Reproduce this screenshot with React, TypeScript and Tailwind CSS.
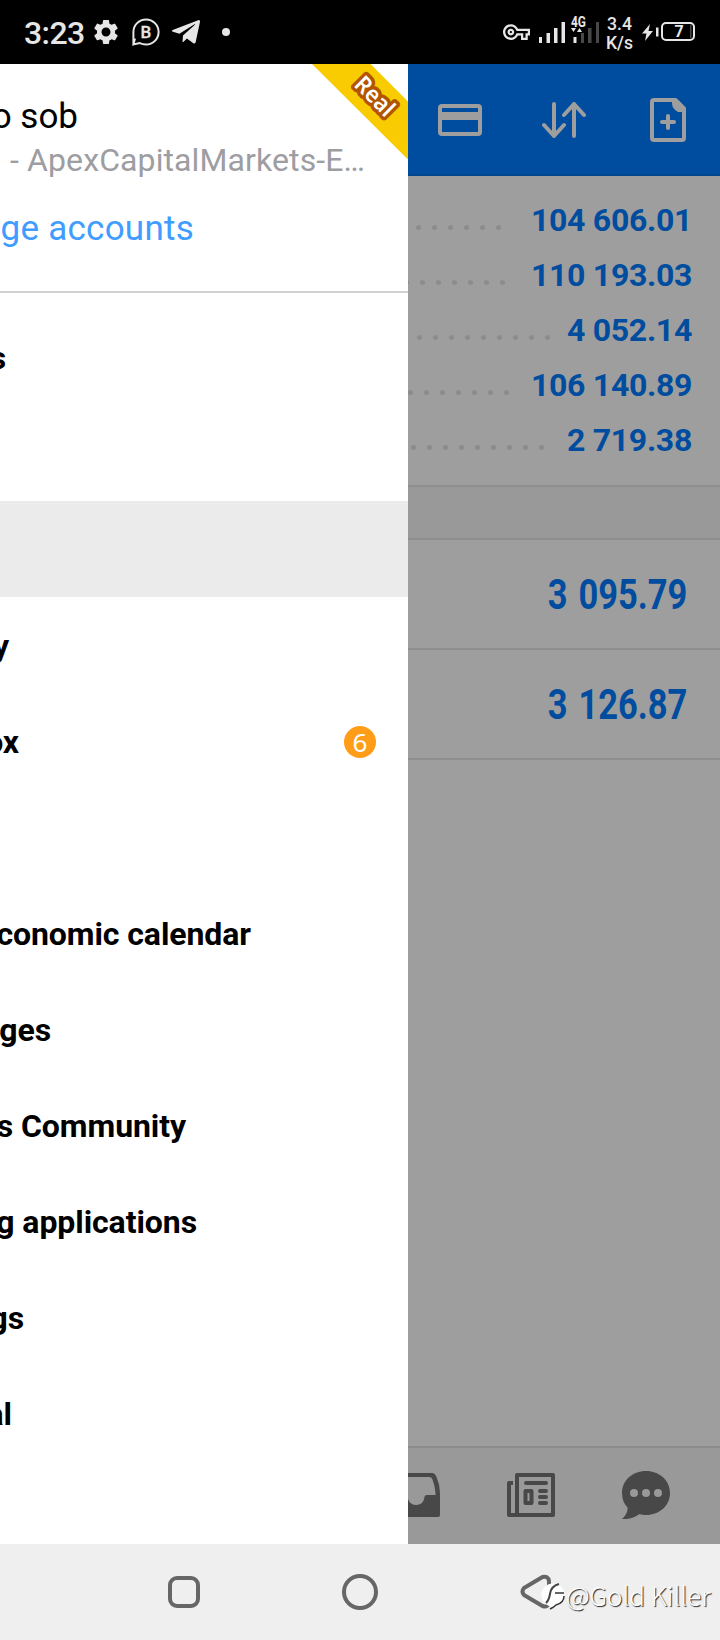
import { MdOutlineVpnKey, MdSettings } from "react-icons/md";
import { FaTelegramPlane } from "react-icons/fa";

type Summary = { value: string; dots: number; end: string; number: string };

const SUMMARY: Summary[] = [
  { value: "104 606.01", dots: 6, end: "w-[93px]", number: "w-[157px]" },
  { value: "110 193.03", dots: 7, end: "w-[97px]", number: "w-[161px]" },
  { value: "4 052.14", dots: 9, end: "w-[142px]", number: "w-[125px]" },
  { value: "106 140.89", dots: 7, end: "w-[101px]", number: "w-[161px]" },
  { value: "2 719.38", dots: 9, end: "w-[136px]", number: "w-[125px]" },
];

const POSITIONS = ["3 095.79", "3 126.87"];

type MenuItem = { label: string; width: string; active?: boolean; badge?: number };

const MENU: MenuItem[] = [
  { label: "s", width: "w-[6px]" },
  { label: "", width: "w-0" },
  { label: "", width: "w-0", active: true },
  { label: "y", width: "w-[9px]" },
  { label: "ox", width: "w-[19px]", badge: 6 },
  { label: "", width: "w-0" },
  { label: "conomic calendar", width: "w-[251px]" },
  { label: "ges", width: "w-[51px]" },
  { label: "s Community", width: "w-[186px]" },
  { label: "g applications", width: "w-[197px]" },
  { label: "gs", width: "w-[24px]" },
  { label: "al", width: "w-[12px]" },
];

function StatusBar() {
  return (
    <header className="flex h-16 shrink-0 items-center bg-black text-[#e6e6e6]">
      <span className="ml-6 w-[69px] pt-0.5 text-[32px] font-medium tracking-[-0.6px]">3:23</span>
      <MdSettings className="-ml-0.5 size-[30px] shrink-0" />
      <svg className="ml-[11px] size-7 shrink-0" viewBox="0 0 28 28" fill="none">
        <path d="M1.4 26.5V14A12.6 12.6 0 1 1 14 26.6C11.7 26.6 9.5 26 7.7 25L1.4 26.5L3 20.6" stroke="currentColor" strokeWidth="2" />
        <text x="13.8" y="20" textAnchor="middle" fill="currentColor" stroke="currentColor" strokeWidth=".3" className="text-[17px] font-medium">B</text>
      </svg>
      <FaTelegramPlane className="ml-2.5 size-8 shrink-0" />
      <span className="ml-5 size-2 rounded-full bg-current" />
      <svg className="ml-auto h-16 w-[220px] shrink-0" viewBox="500 0 220 64" fill="currentColor">
        <MdOutlineVpnKey x="503" y="18.500" size={27} />
        <path d="M539 37h3v6h-3zM546.5 33h3.5v10h-3.5zM554 28h3.5v15h-3.5zM561.5 22h3.5v21h-3.5zM573.5 37h3v6h-3z" />
        <path d="M581 33h3v10h-3zM588 28h3.5v15h-3.5zM596 22h3v21h-3z" fill="#484848" />
        <text x="571" y="27" textLength="15" lengthAdjust="spacingAndGlyphs" className="text-[14px] font-bold">4G</text>
        <path d="M571 28h5l-2.5 4zM577 32h5l-2.5-4z" />
        <text x="607" y="30" textLength="25" lengthAdjust="spacingAndGlyphs" className="text-[18px] font-medium">3.4</text>
        <text x="606" y="49" textLength="27" lengthAdjust="spacingAndGlyphs" className="text-[18px] font-medium">K/s</text>
        <path d="M650 24l-8 9.500h4.500l-1.500 7.500 8-10h-4.500z" />
        <rect x="656" y="27.500" width="2.500" height="9" />
        <rect x="662" y="23" width="32" height="17" rx="4" fill="none" stroke="currentColor" strokeWidth="2" />
        <path d="M690 25h1.500v13h-1.500z" fill="#484848" />
        <text x="679" y="37" textAnchor="middle" className="text-[16px] font-bold">7</text>
      </svg>
    </header>
  );
}

function Ribbon() {
  return (
    <svg className="absolute top-0 right-0 h-[96px] w-[97px]" viewBox="0 0 97 96">
      <path d="M1 0H59.500L97 37.500V95.500Z" fill="#f8cc00" />
      <text
        transform="translate(63.500 32.500) rotate(45)"
        y="7.500"
        textAnchor="middle"
        textLength="46"
        lengthAdjust="spacingAndGlyphs"
        fill="#fff"
        stroke="#b35400"
        strokeWidth="7"
        strokeLinejoin="round"
        paintOrder="stroke"
        className="font-['Noto_Sans',sans-serif] text-[23px] font-semibold"
      >
        Real
      </text>
    </svg>
  );
}

function Drawer() {
  return (
    <aside className="relative flex w-[408px] shrink-0 flex-col overflow-hidden bg-white text-black">
      <Ribbon />
      <div className="flex h-[229px] shrink-0 flex-col items-start border-b-2 border-[#d0d0d0]">
        <div className="mt-8 flex h-[42px] w-[78px] items-center justify-end whitespace-nowrap text-[35px]">o sob</div>
        <div className="mt-px flex h-[42px] w-[365px] items-center justify-end whitespace-nowrap text-[32px] tracking-[0.1px] text-[#9d9da2]">
          - ApexCapitalMarkets-E…
        </div>
        <div className="mt-[27px] flex h-[42px] w-[194px] items-center justify-end whitespace-nowrap text-[35px] tracking-[0.25px] text-[#409cff]">
          ge accounts
        </div>
      </div>
      <nav className="mt-4">
        {MENU.map((item, i) => (
          <div key={i} className={`flex h-24 items-center justify-between ${item.active ? "bg-[#ebebeb]" : ""}`}>
            <span className={`flex justify-end whitespace-nowrap pt-0.5 text-[32px] font-bold tracking-[-0.08px] ${item.width}`}>
              {item.label}
            </span>
            {item.badge && (
              <span className="mt-0.5 mr-8 flex size-8 items-center justify-center rounded-full bg-[#ff9d18] font-['Noto_Sans',sans-serif] text-[26px] leading-none text-white">
                {item.badge}
              </span>
            )}
          </div>
        ))}
      </nav>
    </aside>
  );
}

function Toolbar() {
  return (
    <div className="flex h-28 shrink-0 items-center border-b-2 border-[#00468f] bg-[#004d9f] pt-0.5 text-[#9e9e9e]">
      <svg className="ml-[30px] h-8 w-11 shrink-0" viewBox="0 0 44 32">
        <rect x="2" y="2" width="40" height="28" rx="2" fill="none" stroke="currentColor" strokeWidth="4" />
        <path d="M2 8h40v8H2z" fill="currentColor" />
      </svg>
      <svg className="ml-[60px] h-9 w-11 shrink-0" viewBox="0 0 44 36" fill="none" stroke="currentColor" strokeWidth="4" strokeLinecap="round" strokeLinejoin="round">
        <path d="M12 2v32M2 23l10 11 10-11M32 34V2M22 13L32 2l10 11" />
      </svg>
      <svg className="ml-16 h-11 w-9 shrink-0" viewBox="0 0 36 44" fill="none" stroke="currentColor" strokeWidth="4" strokeLinecap="round" strokeLinejoin="round">
        <path d="M4 2H25.500L34 10.500V40Q34 42 32 42H4Q2 42 2 40V4Q2 2 4 2Z" />
        <path d="M22 2H26L36 12V14H28Q22 11 22 5Z" fill="currentColor" stroke="none" />
        <path d="M18 18v12M12 24h12" />
      </svg>
    </div>
  );
}

function TabBar() {
  return (
    <div className="flex h-[98px] shrink-0 border-t-2 border-[#8c8c8c] bg-[#999] text-[#484848]">
      <svg className="mt-[25px] h-11 w-8 shrink-0" viewBox="0 0 32 44">
        <path d="M0 0H24Q27 0 28.500 4Q32 12 32 20V42Q32 44 30 44H0V26Q2 32 8.500 32Q16 31 16.500 24Q16.500 22 19 22H27Q28 22 27.500 20Q27 13 24.500 6.500Q24 4 21.500 4H0Z" fill="currentColor" />
      </svg>
      <svg className="mt-[25px] ml-[67px] h-11 w-12 shrink-0" viewBox="0 0 48 44" fill="none" stroke="currentColor" strokeWidth="4" strokeLinejoin="round">
        <path d="M10 2H46V42H10ZM6 10H2V42H10" />
        <path d="M19 10H39M33 18H39M33 24H39M33 30H39" strokeLinecap="round" />
        <rect x="18.500" y="18" width="6" height="12" />
      </svg>
      <svg className="mt-[23px] ml-[67px] h-12 w-12 shrink-0" viewBox="0 0 48 48">
        <path d="M24 0C37.500 0 48 9.500 48 22S37.500 44 24 44C21.500 44 19.500 43.700 17.500 43C12 47 6 48.500 0 48C3.500 44.500 6 41 5.500 36.500C2 33 0 28 0 22C0 9.500 10.500 0 24 0Z" fill="currentColor" />
        <g fill="#999">
          <circle cx="12" cy="22" r="4" />
          <circle cx="24" cy="22" r="4" />
          <circle cx="36" cy="22" r="4" />
        </g>
      </svg>
    </div>
  );
}

function TradeScreen() {
  return (
    <main className="flex w-[312px] shrink-0 flex-col overflow-hidden bg-[#9e9e9e] text-[#004d9f]">
      <Toolbar />
      <div className="h-[311px] shrink-0 border-b-2 border-[#8e8e8e] pt-4">
        {SUMMARY.map((row) => (
          <div key={row.value} className="flex h-[55px] items-center">
            <div className={`flex shrink-0 items-center justify-end gap-[11px] overflow-hidden pt-[15px] ${row.end}`}>
              {Array.from({ length: row.dots }, (_, i) => (
                <span key={i} className="size-[5px] shrink-0 rounded-full bg-[#8c8c8c]" />
              ))}
            </div>
            <span className={`ml-auto whitespace-nowrap text-[32px] font-bold tracking-[-0.3px] ${row.number}`}>{row.value}</span>
            <span className={row.value === "104 606.01" ? "w-8" : "w-7"} />
          </div>
        ))}
      </div>
      <div className="h-[53px] shrink-0 border-b-2 border-[#8e8e8e] bg-[#999]" />
      {POSITIONS.map((value) => (
        <div key={value} className="flex h-[110px] shrink-0 items-center justify-end border-b-2 border-[#8e8e8e] pr-[33px]">
          <span className="origin-right scale-x-[0.82] whitespace-nowrap text-[42px] font-bold [word-spacing:3px]">{value}</span>
        </div>
      ))}
      <div className="grow" />
      <TabBar />
    </main>
  );
}

function SystemNav() {
  return (
    <footer className="relative flex h-24 shrink-0 items-center bg-[#efefef] text-[#666]">
      <span className="ml-[168px] size-8 rounded-[9px] border-4 border-current" />
      <span className="ml-[142px] size-9 rounded-full border-4 border-current" />
      <svg className="ml-[142px] h-9 w-8" viewBox="0 0 32 36" fill="none" stroke="currentColor" strokeWidth="4" strokeLinejoin="round">
        <path d="M22.500 3L4 14Q1 17.500 4 21L22.500 32Q28 34 29 28V7Q28 1.500 22.500 3Z" />
      </svg>
      <div className="absolute top-[35px] left-[541px] flex items-center">
        <svg className="h-8 w-6" viewBox="0 0 24 32">
          <circle cx="12" cy="16" r="11.500" fill="#fff" />
          <path d="M5 24Q8 21 9 15Q10 7 18 5" fill="none" stroke="#444" strokeWidth="2" />
          <path d="M14 14H23M23 17Q23 24 15 26Q13 28 9 30" fill="none" stroke="#333" strokeWidth="1.500" />
        </svg>
        <span className="ml-px whitespace-nowrap font-['Noto_Sans_CJK_SC',sans-serif] text-[26px] leading-8 font-light tracking-[-0.05px] text-white [text-shadow:1px_1px_1px_#222]">
          @Gold Killer
        </span>
      </div>
    </footer>
  );
}

export default function App() {
  return (
    <div className="flex h-[1640px] w-[720px] flex-col overflow-hidden font-['Roboto',sans-serif]">
      <StatusBar />
      <div className="flex h-[1480px] shrink-0">
        <Drawer />
        <TradeScreen />
      </div>
      <SystemNav />
    </div>
  );
}
